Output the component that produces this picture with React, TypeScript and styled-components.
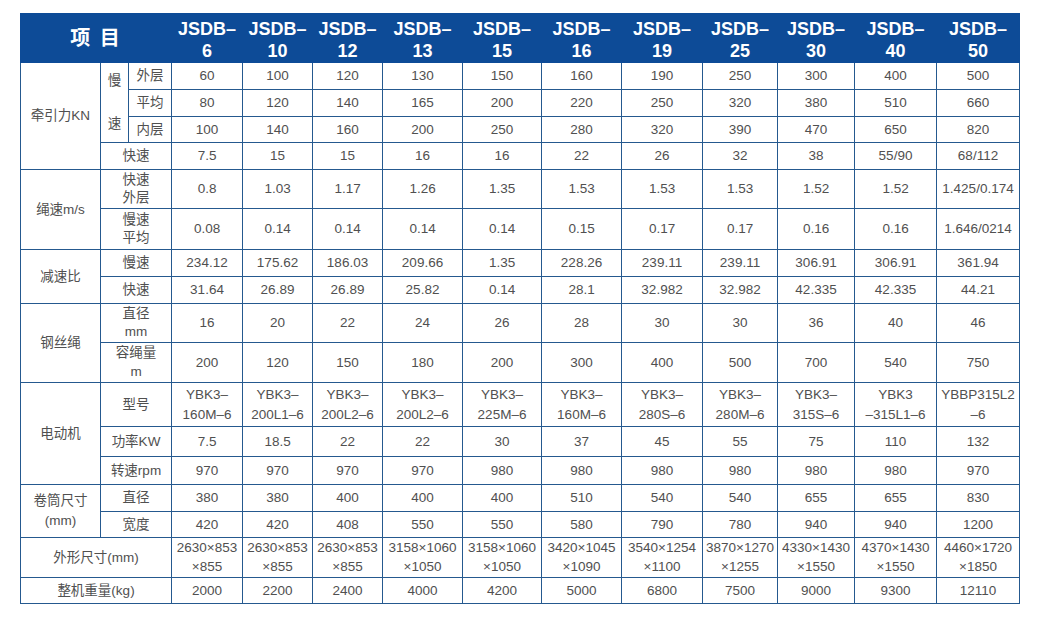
import React from "react";
import styled, { createGlobalStyle } from "styled-components";

const Global = createGlobalStyle`
  html, body { margin: 0; padding: 0; background: #ffffff; }
  body { font-family: "Liberation Sans", "Noto Sans CJK SC", sans-serif; }
`;

const Page = styled.div`
  padding: 13px 0 0 20px;
  width: 1042px;
  height: 617px;
  box-sizing: border-box;
`;

const Table = styled.table`
  border-collapse: collapse;
  table-layout: fixed;
  width: 999px;
  color: #505050;
  font-size: 13.5px;
`;

const Row = styled.tr<{ $h: number }>`
  height: ${(p) => p.$h}px;
`;

const HeadCell = styled.th<{ $big?: boolean }>`
  background: #0d4b97;
  color: #ffffff;
  font-weight: bold;
  font-size: ${(p) => (p.$big ? 20 : 18)}px;
  line-height: 22px;
  padding: ${(p) => (p.$big ? "0" : "3px 0 0 0")};
  text-align: center;
  vertical-align: middle;
  border: 1px solid #0d4b97;
  white-space: pre-line;
  letter-spacing: ${(p) => (p.$big ? "2px" : "0")};
  font-family: "Liberation Sans", "Noto Sans CJK SC", sans-serif;
`;

const Cell = styled.td<{ $tight?: boolean }>`
  border: 1px solid #25598f;
  text-align: center;
  vertical-align: middle;
  padding: 0;
  line-height: ${(p) => (p.$tight ? 18.5 : 20)}px;
  white-space: pre-line;
  font-family: "Liberation Sans", "Noto Sans CJK SC", sans-serif;
`;

const VerticalPair = styled.div`
  display: flex;
  flex-direction: column;
  align-items: center;
  gap: 23px;
`;

const models = ["6", "10", "12", "13", "15", "16", "19", "25", "30", "40", "50"];
const colWidths = [80, 28, 43, 71, 70, 70, 80, 79, 80, 81, 75, 77, 82, 83];

const traction = {
  outer: ["60", "100", "120", "130", "150", "160", "190", "250", "300", "400", "500"],
  avg: ["80", "120", "140", "165", "200", "220", "250", "320", "380", "510", "660"],
  inner: ["100", "140", "160", "200", "250", "280", "320", "390", "470", "650", "820"],
  fast: ["7.5", "15", "15", "16", "16", "22", "26", "32", "38", "55/90", "68/112"],
};

const ropeSpeed = {
  fast: ["0.8", "1.03", "1.17", "1.26", "1.35", "1.53", "1.53", "1.53", "1.52", "1.52", "1.425/0.174"],
  slow: ["0.08", "0.14", "0.14", "0.14", "0.14", "0.15", "0.17", "0.17", "0.16", "0.16", "1.646/0214"],
};

const ratio = {
  slow: ["234.12", "175.62", "186.03", "209.66", "1.35", "228.26", "239.11", "239.11", "306.91", "306.91", "361.94"],
  fast: ["31.64", "26.89", "26.89", "25.82", "0.14", "28.1", "32.982", "32.982", "42.335", "42.335", "44.21"],
};

const rope = {
  dia: ["16", "20", "22", "24", "26", "28", "30", "30", "36", "40", "46"],
  cap: ["200", "120", "150", "180", "200", "300", "400", "500", "700", "540", "750"],
};

const motor = {
  model: [
    "YBK3–\n160M–6",
    "YBK3–\n200L1–6",
    "YBK3–\n200L2–6",
    "YBK3–\n200L2–6",
    "YBK3–\n225M–6",
    "YBK3–\n160M–6",
    "YBK3–\n280S–6",
    "YBK3–\n280M–6",
    "YBK3–\n315S–6",
    "YBK3\n–315L1–6",
    "YBBP315L2\n–6",
  ],
  power: ["7.5", "18.5", "22", "22", "30", "37", "45", "55", "75", "110", "132"],
  rpm: ["970", "970", "970", "970", "980", "980", "980", "980", "980", "980", "970"],
};

const drum = {
  dia: ["380", "380", "400", "400", "400", "510", "540", "540", "655", "655", "830"],
  width: ["420", "420", "408", "550", "550", "580", "790", "780", "940", "940", "1200"],
};

const dims = [
  "2630×853\n×855",
  "2630×853\n×855",
  "2630×853\n×855",
  "3158×1060\n×1050",
  "3158×1060\n×1050",
  "3420×1045\n×1090",
  "3540×1254\n×1100",
  "3870×1270\n×1255",
  "4330×1430\n×1550",
  "4370×1430\n×1550",
  "4460×1720\n×1850",
];

const weight = ["2000", "2200", "2400", "4000", "4200", "5000", "6800", "7500", "9000", "9300", "12110"];

const Values: React.FC<{ list: string[]; tight?: boolean }> = ({ list, tight }) => (
  <>
    {list.map((v, i) => (
      <Cell key={i} $tight={tight}>
        {v}
      </Cell>
    ))}
  </>
);

export default function App() {
  return (
    <Page>
      <Global />
      <Table>
        <colgroup>
          {colWidths.map((w, i) => (
            <col key={i} style={{ width: w }} />
          ))}
        </colgroup>
        <thead>
          <Row $h={49}>
            <HeadCell $big colSpan={3}>项 目</HeadCell>
            {models.map((m) => (
              <HeadCell key={m}>{`JSDB–\n${m}`}</HeadCell>
            ))}
          </Row>
        </thead>
        <tbody>
          <Row $h={27}>
            <Cell rowSpan={4}>牵引力KN</Cell>
            <Cell rowSpan={3}>
              <VerticalPair>
                <span>慢</span>
                <span>速</span>
              </VerticalPair>
            </Cell>
            <Cell>外层</Cell>
            <Values list={traction.outer} />
          </Row>
          <Row $h={27}>
            <Cell>平均</Cell>
            <Values list={traction.avg} />
          </Row>
          <Row $h={26}>
            <Cell>内层</Cell>
            <Values list={traction.inner} />
          </Row>
          <Row $h={27}>
            <Cell colSpan={2}>快速</Cell>
            <Values list={traction.fast} />
          </Row>

          <Row $h={39}>
            <Cell rowSpan={2}>绳速m/s</Cell>
            <Cell colSpan={2} $tight>{"快速\n外层"}</Cell>
            <Values list={ropeSpeed.fast} />
          </Row>
          <Row $h={41}>
            <Cell colSpan={2} $tight>{"慢速\n平均"}</Cell>
            <Values list={ropeSpeed.slow} />
          </Row>

          <Row $h={27}>
            <Cell rowSpan={2}>减速比</Cell>
            <Cell colSpan={2}>慢速</Cell>
            <Values list={ratio.slow} />
          </Row>
          <Row $h={27}>
            <Cell colSpan={2}>快速</Cell>
            <Values list={ratio.fast} />
          </Row>

          <Row $h={39}>
            <Cell rowSpan={2}>钢丝绳</Cell>
            <Cell colSpan={2} $tight>{"直径\nmm"}</Cell>
            <Values list={rope.dia} />
          </Row>
          <Row $h={40}>
            <Cell colSpan={2} $tight>{"容绳量\nm"}</Cell>
            <Values list={rope.cap} />
          </Row>

          <Row $h={44}>
            <Cell rowSpan={3}>电动机</Cell>
            <Cell colSpan={2}>型号</Cell>
            <Values list={motor.model} />
          </Row>
          <Row $h={30}>
            <Cell colSpan={2}>功率KW</Cell>
            <Values list={motor.power} />
          </Row>
          <Row $h={28}>
            <Cell colSpan={2}>转速rpm</Cell>
            <Values list={motor.rpm} />
          </Row>

          <Row $h={27}>
            <Cell rowSpan={2}>{"卷筒尺寸\n(mm)"}</Cell>
            <Cell colSpan={2}>直径</Cell>
            <Values list={drum.dia} />
          </Row>
          <Row $h={26}>
            <Cell colSpan={2}>宽度</Cell>
            <Values list={drum.width} />
          </Row>

          <Row $h={40}>
            <Cell colSpan={3}>外形尺寸(mm)</Cell>
            <Values list={dims} tight />
          </Row>
          <Row $h={26}>
            <Cell colSpan={3}>整机重量(kg)</Cell>
            <Values list={weight} />
          </Row>
        </tbody>
      </Table>
    </Page>
  );
}
